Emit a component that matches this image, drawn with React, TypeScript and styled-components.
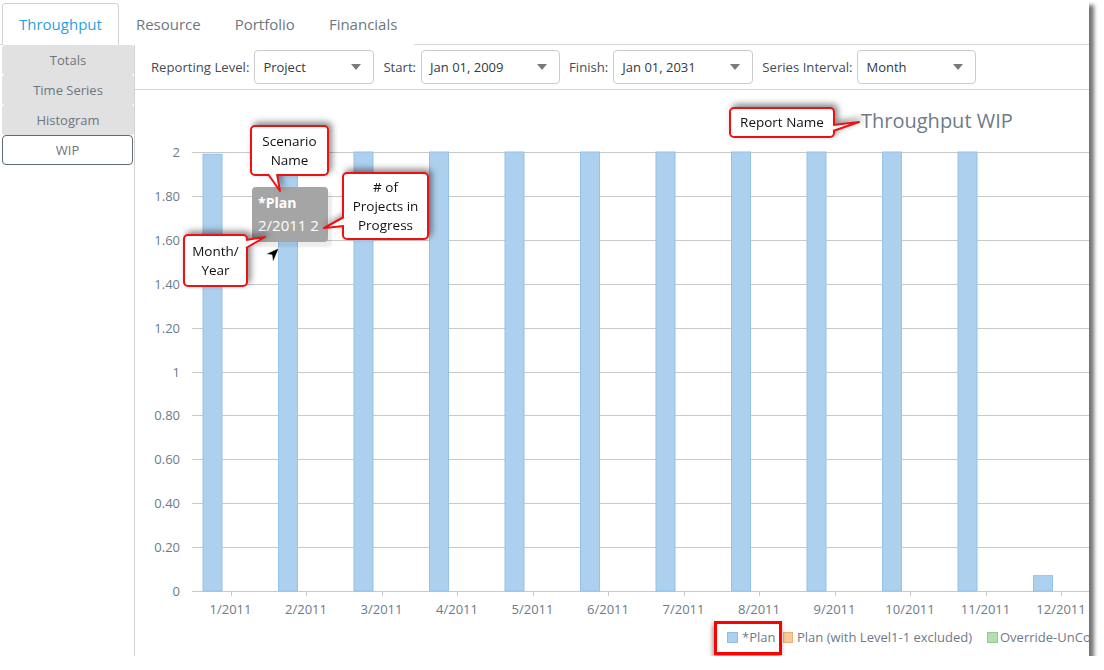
import React from 'react';
import styled, { createGlobalStyle } from 'styled-components';

const GlobalStyle = createGlobalStyle`
  html, body { margin: 0; padding: 0; background: #ffffff; }
  body { font-family: "Open Sans", "Noto Sans", sans-serif; }
  * { box-sizing: border-box; }
`;

const Frame = styled.div`
  position: relative;
  width: 1089px;
  height: 656px;
  background: #ffffff;
  box-shadow: 5px 5px 4px rgba(0, 0, 0, 0.55);
  overflow: hidden;
  display: flex;
  flex-direction: column;
`;

const TabBar = styled.div`
  display: flex;
  height: 45px;
  padding: 3px 0 0 2px;
  border-bottom: 1px solid #d6d6d6;
  flex-shrink: 0;
`;

const Tab = styled.div<{ $active?: boolean }>`
  display: flex;
  align-items: center;
  padding: 0 16px 1px;
  margin-bottom: -1px;
  font-size: 15px;
  color: ${(p) => (p.$active ? '#2a9fe3' : '#6d7780')};
  background: #ffffff;
  border: 1px solid ${(p) => (p.$active ? '#d3d3d3' : 'transparent')};
  border-bottom: none;
  border-radius: 4px 4px 0 0;
`;

const Body = styled.div`
  display: flex;
  flex: 1;
  min-height: 0;
`;

const Sidebar = styled.div`
  width: 135px;
  flex-shrink: 0;
  padding-left: 2px;
  border-right: 1px solid #d3d3d3;
  display: flex;
  flex-direction: column;
`;

const SideItem = styled.div<{ $active?: boolean }>`
  height: 30px;
  display: flex;
  align-items: center;
  justify-content: center;
  font-size: 13px;
  color: #6b7580;
  background: ${(p) => (p.$active ? '#ffffff' : '#e1e1e1')};
  border: ${(p) => (p.$active ? '1px solid #5f6b77' : 'none')};
  border-radius: ${(p) => (p.$active ? '4px' : '3px')};
  margin-right: ${(p) => (p.$active ? '1px' : '0')};
`;

const Main = styled.div`
  flex: 1;
  min-width: 0;
  display: flex;
  flex-direction: column;
`;

const Toolbar = styled.div`
  height: 45px;
  flex-shrink: 0;
  display: flex;
  align-items: center;
  gap: 9px;
  padding-left: 16px;
  border-bottom: 1px solid #d6d6d6;
`;

const Field = styled.div`
  display: flex;
  align-items: center;
  gap: 5px;
`;

const Label = styled.span`
  font-size: 13.15px;
  color: #454b52;
`;

const Select = styled.div<{ $w: number }>`
  width: ${(p) => p.$w}px;
  height: 34px;
  margin-top: -1px;
  display: flex;
  align-items: center;
  justify-content: space-between;
  padding: 0 12px 0 8px;
  border: 1px solid #cccccc;
  border-radius: 4px;
  font-size: 13px;
  color: #333a40;
  background: #ffffff;
`;

const Caret = styled.span`
  width: 0;
  height: 0;
  border-left: 5px solid transparent;
  border-right: 5px solid transparent;
  border-top: 6px solid #7a7a7a;
`;

const ChartArea = styled.div`
  flex: 1;
  position: relative;
  min-height: 0;
`;

const ChartSvg = styled.svg`
  display: block;
  font-family: "Open Sans", "Noto Sans", sans-serif;
`;

const CalloutWrap = styled.div<{ $x: number; $y: number; $w: number; $h: number }>`
  position: absolute;
  left: ${(p) => p.$x}px;
  top: ${(p) => p.$y}px;
  width: ${(p) => p.$w}px;
  height: ${(p) => p.$h}px;
  filter: drop-shadow(3px -3px 3px rgba(0, 0, 0, 0.45));
  z-index: 3;
`;

const CalloutBox = styled.div`
  width: 100%;
  height: 100%;
  display: flex;
  flex-direction: column;
  align-items: center;
  justify-content: center;
  background: #ffffff;
  border: 2px solid #ee1111;
  border-radius: 5px;
  font-size: 13.5px;
  line-height: 19px;
  color: #111111;
  text-align: center;
  white-space: nowrap;
`;

const PointerSvg = styled.svg`
  position: absolute;
  left: 0;
  top: 0;
  overflow: visible;
`;

const Tooltip = styled.div`
  position: absolute;
  left: 252px;
  top: 187px;
  width: 76px;
  height: 55px;
  padding: 4px 6px 0;
  background: #a5a5a5;
  border-radius: 4px;
  box-shadow: 4px 5px 2px rgba(0, 0, 0, 0.07);
  color: #ffffff;
  z-index: 2;
`;

const TipTitle = styled.div`
  font-size: 14px;
  font-weight: 700;
  line-height: 23px;
`;

const TipValue = styled.div`
  font-size: 15px;
  line-height: 23px;
  white-space: nowrap;
`;

const Cursor = styled.svg`
  position: absolute;
  left: 264px;
  top: 247px;
  z-index: 4;
`;

const Highlight = styled.div`
  position: absolute;
  left: 714px;
  top: 621px;
  width: 68px;
  height: 34px;
  border: 3px solid #ff0000;
  box-shadow: -1px 3px 5px rgba(0, 0, 0, 0.45);
  z-index: 3;
`;

type Pt = [number, number];

function Callout(props: { x: number; y: number; w: number; h: number; ptr: [Pt, Pt, Pt]; lines: string[] }) {
  const { x, y, w, h, ptr, lines } = props;
  const local = ptr.map(([px, py]) => [px - x, py - y] as Pt);
  const pts = local.map((p) => p.join(',')).join(' ');
  return (
    <CalloutWrap $x={x} $y={y} $w={w} $h={h}>
      <CalloutBox>
        {lines.map((l) => (
          <div key={l}>{l}</div>
        ))}
      </CalloutBox>
      <PointerSvg width={w} height={h}>
        <polygon points={pts} fill="#ffffff" />
        <polyline points={pts} fill="none" stroke="#ee1111" strokeWidth={2} strokeLinejoin="round" />
      </PointerSvg>
    </CalloutWrap>
  );
}

const yTicks: { v: number; l: string }[] = [
  { v: 2, l: '2' },
  { v: 1.8, l: '1.80' },
  { v: 1.6, l: '1.60' },
  { v: 1.4, l: '1.40' },
  { v: 1.2, l: '1.20' },
  { v: 1, l: '1' },
  { v: 0.8, l: '0.80' },
  { v: 0.6, l: '0.60' },
  { v: 0.4, l: '0.40' },
  { v: 0.2, l: '0.20' },
  { v: 0, l: '0' },
];

const values = [1.99, 2, 2, 2, 2, 2, 2, 2, 2, 2, 2, 0.07];
const yOf = (v: number) => 591 - v * 219.5;
const cx = (i: number) => 230.5 + i * 75.5;

const AXIS = '#6d7b88';

function Chart() {
  return (
    <ChartSvg width={954} height={566} viewBox="135 90 954 566">
      <text x={861} y={128} fontSize={20} fill="#6e7b88">
        Throughput WIP
      </text>
      {yTicks.map((t) => (
        <g key={t.l}>
          <line x1={192} x2={1100} y1={Math.round(yOf(t.v)) + 0.5} y2={Math.round(yOf(t.v)) + 0.5} stroke="#c9c9c9" strokeWidth={1} />
          <text x={180} y={Math.round(yOf(t.v)) + 5} fontSize={13} fill={AXIS} textAnchor="end">
            {t.l}
          </text>
        </g>
      ))}
      {values.map((v, i) => {
        const top = yOf(v);
        return (
          <rect
            key={i}
            x={cx(i) - 27.5}
            y={top}
            width={19}
            height={591 - top}
            fill="#acd0ee"
            stroke="#93c2ea"
            strokeWidth={1}
          />
        );
      })}
      {values.map((_, i) => (
        <g key={`x${i}`}>
          <line x1={Math.round(cx(i)) + 0.5} x2={Math.round(cx(i)) + 0.5} y1={591} y2={596} stroke="#c9c9c9" />
          <text x={cx(i)} y={614} fontSize={13} fill={AXIS} textAnchor="middle">
            {`${i + 1}/2011`}
          </text>
        </g>
      ))}
      <rect x={727.5} y={632.5} width={10} height={10} fill="#acd0ee" stroke="#8fbfe8" />
      <text x={742} y={642} fontSize={13} fill={AXIS}>
        *Plan
      </text>
      <rect x={783.5} y={632.5} width={9} height={10} fill="#f7c99a" stroke="#eeb070" />
      <text x={797} y={642} fontSize={13} fill={AXIS}>
        Plan (with Level1-1 excluded)
      </text>
      <rect x={987.5} y={632.5} width={10} height={10} fill="#b4ddb4" stroke="#93cc93" />
      <text x={1000} y={642} fontSize={13} fill={AXIS}>
        Override-UnCo
      </text>
    </ChartSvg>
  );
}

export default function App() {
  return (
    <>
      <GlobalStyle />
      <Frame>
        <TabBar>
          <Tab $active>Throughput</Tab>
          <Tab>Resource</Tab>
          <Tab>Portfolio</Tab>
          <Tab>Financials</Tab>
        </TabBar>
        <Body>
          <Sidebar>
            <SideItem>Totals</SideItem>
            <SideItem>Time Series</SideItem>
            <SideItem>Histogram</SideItem>
            <SideItem $active>WIP</SideItem>
          </Sidebar>
          <Main>
            <Toolbar>
              <Field>
                <Label>Reporting Level:</Label>
                <Select $w={120}>
                  Project
                  <Caret />
                </Select>
              </Field>
              <Field>
                <Label>Start:</Label>
                <Select $w={139}>
                  Jan 01, 2009
                  <Caret />
                </Select>
              </Field>
              <Field>
                <Label>Finish:</Label>
                <Select $w={140}>
                  Jan 01, 2031
                  <Caret />
                </Select>
              </Field>
              <Field>
                <Label>Series Interval:</Label>
                <Select $w={119}>
                  Month
                  <Caret />
                </Select>
              </Field>
            </Toolbar>
            <ChartArea>
              <Chart />
            </ChartArea>
          </Main>
        </Body>

        <Tooltip>
          <TipTitle>*Plan</TipTitle>
          <TipValue>2/2011 2</TipValue>
        </Tooltip>
        <Cursor width={16} height={16} viewBox="0 0 16 16">
          <polygon points="15,1 2,7 8,8 9,15" fill="#000000" stroke="#ffffff" strokeWidth={0.6} strokeLinejoin="round" />
        </Cursor>

        <Callout x={250} y={125} w={79} h={51} ptr={[[268, 174], [280, 191], [277, 174]]} lines={['Scenario', 'Name']} />
        <Callout
          x={342}
          y={172}
          w={87}
          h={68}
          ptr={[[344, 217], [324, 228], [344, 226]]}
          lines={['# of', 'Projects in', 'Progress']}
        />
        <Callout x={183} y={234} w={65} h={53} ptr={[[246, 240], [265, 237], [246, 248]]} lines={['Month/', 'Year']} />
        <Callout x={729} y={107} w={106} h={31} ptr={[[833, 125], [859, 122], [833, 131]]} lines={['Report Name']} />
        <Highlight />
      </Frame>
    </>
  );
}
